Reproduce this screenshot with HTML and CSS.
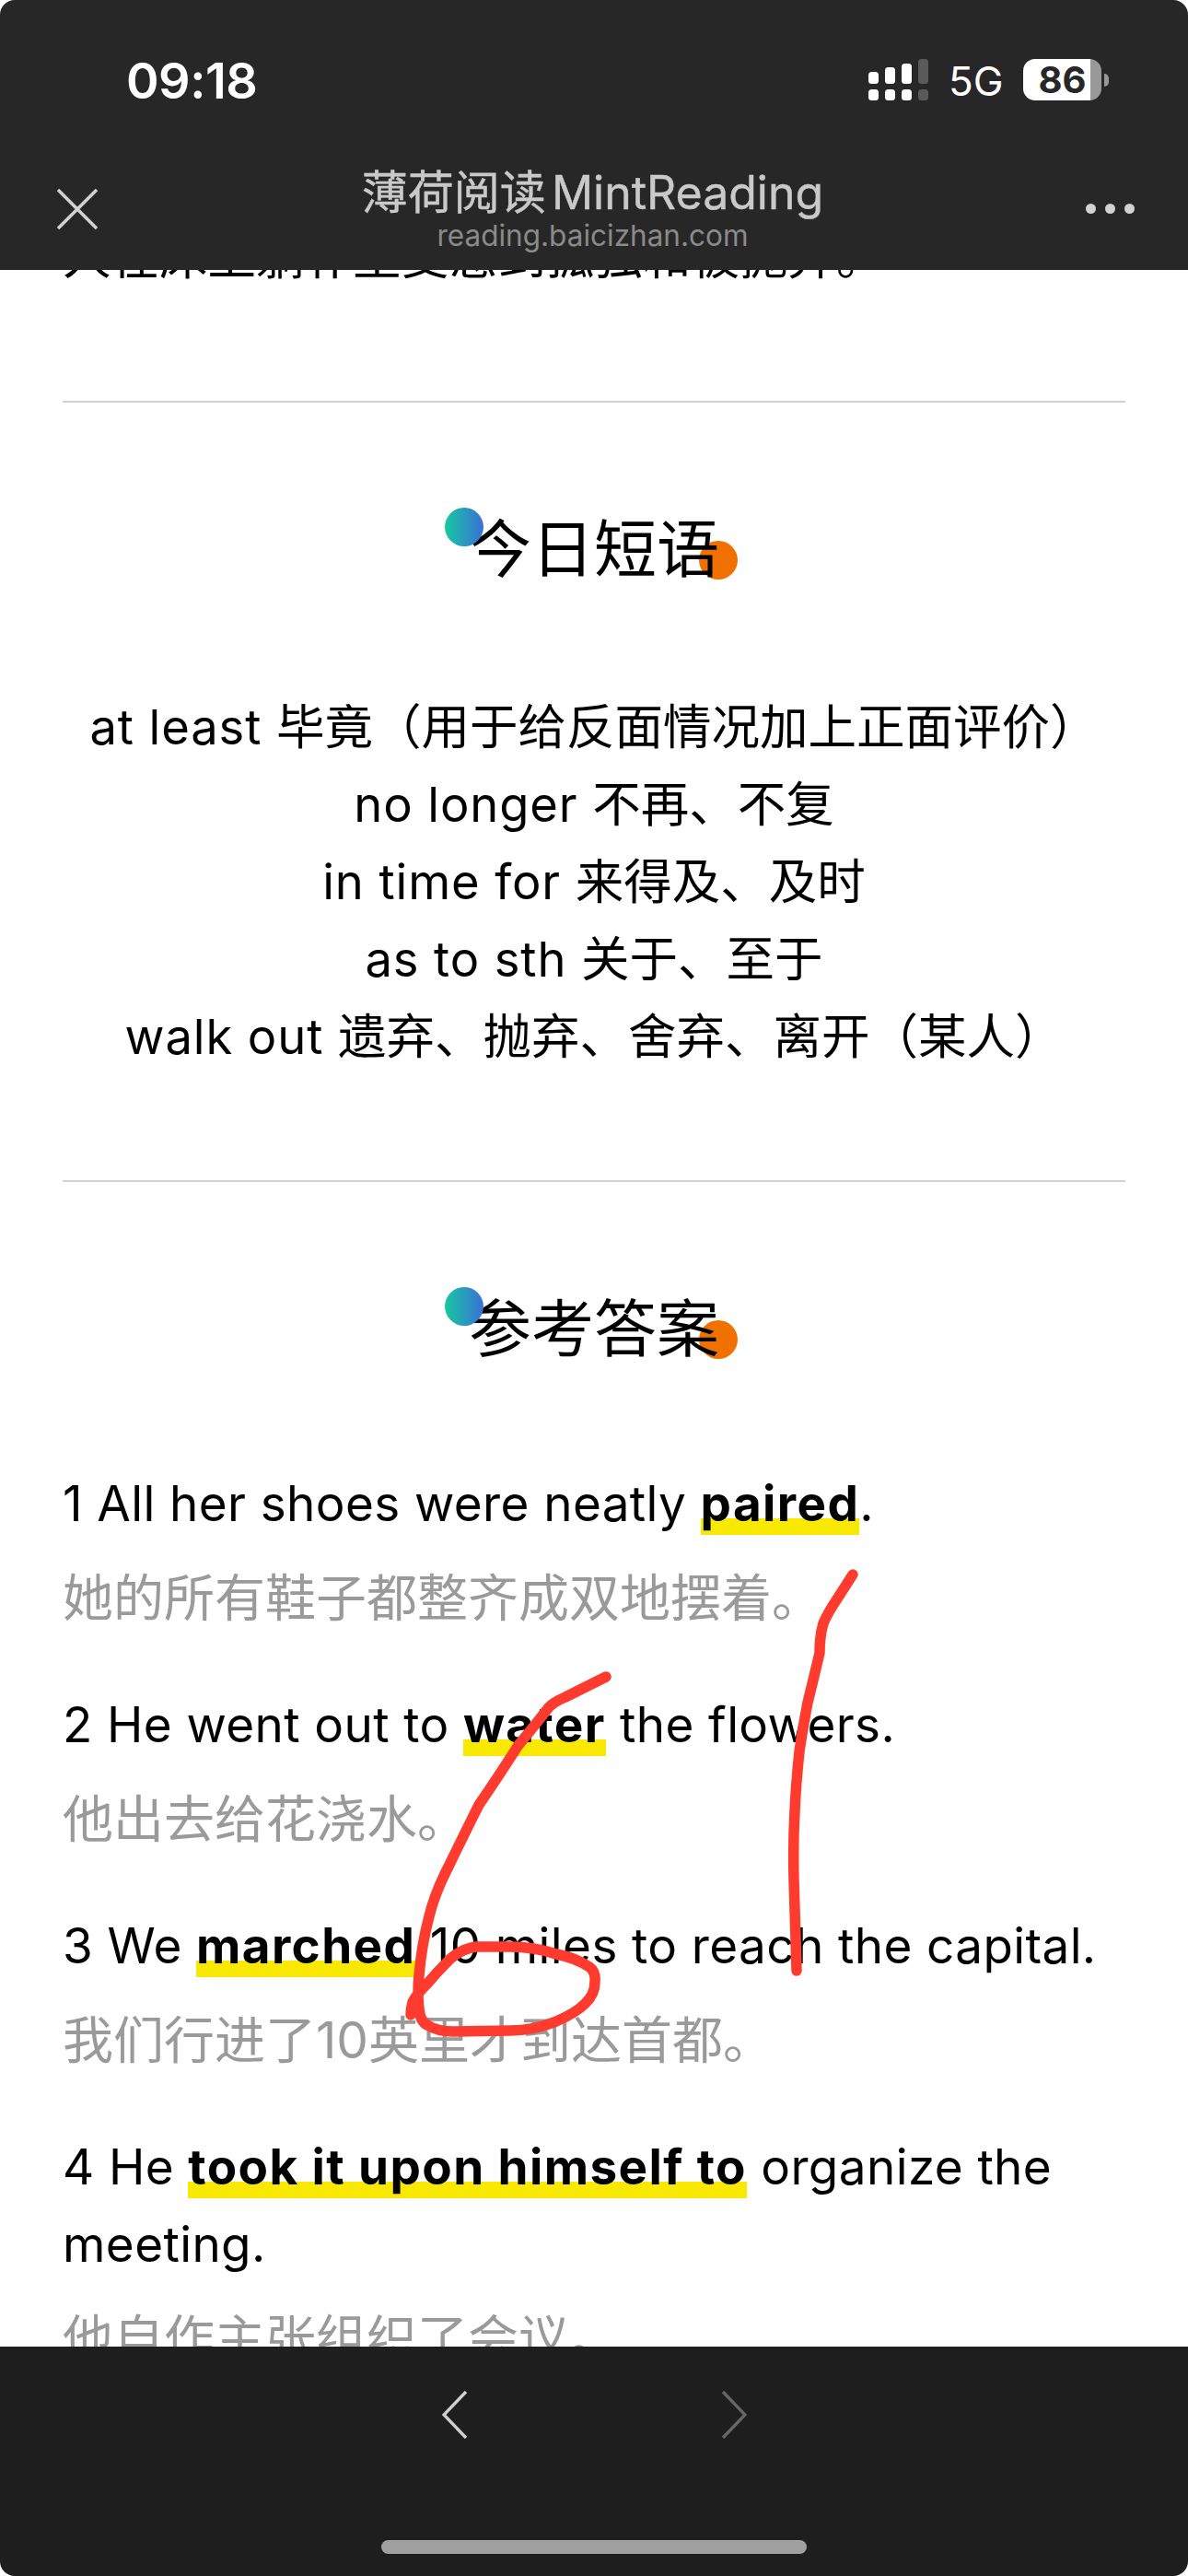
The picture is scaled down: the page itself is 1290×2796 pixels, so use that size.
FILE: index.html
```html
<!DOCTYPE html>
<html lang="zh">
<head>
<meta charset="utf-8">
<title>薄荷阅读 MintReading</title>
<link rel="stylesheet" href="styles.css">
</head>
<body>
<div class="phone">
  <header class="top">
    <div class="status">
      <span class="time">09:18</span>
      <div class="status-right">
        <svg class="signal" width="65" height="45" viewBox="0 0 65 45">
          <rect x="0" y="14" width="11" height="13" rx="3.5" fill="#fff"/>
          <rect x="18" y="9" width="11" height="18" rx="3.5" fill="#fff"/>
          <rect x="36" y="5" width="11" height="22" rx="3.5" fill="#fff"/>
          <rect x="54" y="0" width="11" height="27" rx="3.5" fill="#5a5a5a"/>
          <rect x="0" y="33" width="11" height="12" rx="3.5" fill="#fff"/>
          <rect x="18" y="33" width="11" height="12" rx="3.5" fill="#fff"/>
          <rect x="36" y="33" width="11" height="12" rx="3.5" fill="#fff"/>
          <rect x="54" y="33" width="11" height="12" rx="3.5" fill="#5a5a5a"/>
        </svg>
        <span class="net">5G</span>
        <div class="battery"><span class="level">86</span><span class="cap"></span></div>
      </div>
    </div>
    <nav class="bar">
      <svg class="close" width="44" height="44" viewBox="0 0 44 44"><path d="M1 1 43 43M43 1 1 43" stroke="#d2d2d2" stroke-width="3.6" fill="none"/></svg>
      <div class="titles">
        <div class="title">薄荷阅读 MintReading</div>
        <div class="url">reading.baicizhan.com</div>
      </div>
      <div class="more"><i></i><i></i><i></i></div>
    </nav>
  </header>

  <main class="content">
    <p class="lead">人在床上躺补里受惩到孤独和被抛弃。</p>
    <hr class="rule">
    <section class="block">
      <h2 class="heading"><span>今日短语</span></h2>
      <div class="phrases">
        <p><span class="latin">at least </span>毕竟（用于给反面情况加上正面评价）</p>
        <p><span class="latin">no longer </span>不再、不复</p>
        <p><span class="latin">in time for </span>来得及、及时</p>
        <p><span class="latin">as to sth </span>关于、至于</p>
        <p><span class="latin">walk out </span>遗弃、抛弃、舍弃、离开（某人）</p>
      </div>
    </section>
    <hr class="rule">
    <section class="block">
      <h2 class="heading"><span>参考答案</span></h2>
      <div class="answers">
        <div class="answer">
          <p class="en">1 All her shoes were neatly <b class="mark">paired</b>.</p>
          <p class="zh">她的所有鞋子都整齐成双地摆着。</p>
        </div>
        <div class="answer">
          <p class="en">2 He went out to <b class="mark">water</b> the flowers.</p>
          <p class="zh">他出去给花浇水。</p>
        </div>
        <div class="answer">
          <p class="en">3 We <b class="mark">marched</b> 10 miles to reach the capital.</p>
          <p class="zh">我们行进了10英里才到达首都。</p>
        </div>
        <div class="answer">
          <p class="en">4 He <b class="mark">took it upon himself to</b> organize the meeting.</p>
          <p class="zh">他自作主张组织了会议。</p>
        </div>
      </div>
    </section>
  </main>

  <footer class="bottom">
    <div class="arrows">
      <svg width="28" height="52" viewBox="0 0 28 52"><path d="M26 1 2 26 26 51" stroke="#d0d0d0" stroke-width="3.4" fill="none"/></svg>
      <svg width="28" height="52" viewBox="0 0 28 52"><path d="M2 1 26 26 2 51" stroke="#666" stroke-width="3.4" fill="none"/></svg>
    </div>
    <div class="home"></div>
  </footer>

  <svg class="ink" width="1290" height="2796" viewBox="0 0 1290 2796">
    <path d="M926 1709 L908 1737 Q898 1752 894 1762 Q890 1775 890 1794 Q884 1820 877 1848 Q871 1880 868 1901 Q864 1940 863 1966 Q861 2000 862 2040 L865 2139"/>
    <path d="M658 1820 L614 1842 Q602 1847 596 1853 Q575 1880 563 1894 Q540 1930 520 1959 Q502 1995 487 2026 Q472 2055 466 2080 Q458 2110 455 2144 Q453 2165 455 2180 Q456 2194 464 2198 Q475 2205 492 2205 L553 2204 Q580 2204 604 2194 Q625 2185 635 2175 Q646 2165 646 2151 Q647 2140 640 2135 Q625 2125 604 2121 Q580 2113 553 2113 L517 2113 Q502 2115 489 2126 Q475 2140 464 2153 Q452 2165 448 2173 Q446 2180 446 2187"/>
  </svg>
</div>
</body>
</html>
```
FILE: styles.css
```css
* { box-sizing: border-box; }
html, body { margin: 0; padding: 0; background: #fff; }
body { font-family: Inter, "Noto Sans CJK SC", sans-serif; color: #000; }

.phone {
  position: relative;
  width: 1290px;
  height: 2796px;
  display: flex;
  flex-direction: column;
  overflow: hidden;
  border-radius: 16px;
  background: #fff;
}

.top { background: #272727; height: 293px; flex: none; position: relative; z-index: 1; }
.status { display: flex; justify-content: space-between; align-items: flex-start; padding: 57px 86px 0 137px; height: 171px; }
.time { font-size: 54px; font-weight: 600; color: #fff; line-height: 62px; letter-spacing: -0.5px; }
.status-right { display: flex; align-items: flex-start; padding-top: 7px; }
.signal { display: block; margin-right: 22px; }
.net { font-size: 44px; line-height: 50px; color: #fff; margin-right: 26px; width: 55px; margin-top: -1px; }
.battery { display: flex; align-items: center; }
.level {
  width: 85px; height: 45px; border-radius: 13px;
  background: linear-gradient(90deg, #fff 73px, #999 73px);
  color: #272727; font-size: 40px; font-weight: 700; line-height: 45px; text-align: center;
}
.cap { width: 5px; height: 14px; margin-left: 3px; background: #999; border-radius: 0 7px 7px 0; }

.bar { display: flex; align-items: flex-start; justify-content: space-between; padding: 0 58px 0 62px; position: relative; }
.close { margin-top: 34px; display: block; }
.titles { position: absolute; left: 0; right: 3px; top: 5px; text-align: center; }
.title { font-size: 50px; line-height: 66px; color: #c9c9c9; word-spacing: -8px; -webkit-text-stroke: 0.4px #c9c9c9; }
.url { font-size: 31.5px; line-height: 36px; color: #8a8a8a; margin-top: -4px; }
.more { display: flex; gap: 10px; margin-top: 50px; }
.more i { display: block; width: 11px; height: 11px; border-radius: 50%; background: #d2d2d2; }

.content { flex: 1; min-height: 0; overflow: hidden; padding: 0 68px; font-size: 52.5px; line-height: 84px; }
.content p { margin: 0; }
.lead { margin-top: -56px !important; }
.rule { border: 0; height: 2px; background: #d2d2d2; margin: 114px 0 0; }

.heading { margin: 109px 0 0; text-align: center; font-size: 68px; line-height: 100px; font-weight: 400; }
.heading span { position: relative; z-index: 0; display: inline-block; }
.heading span::before,
.heading span::after { content: ""; position: absolute; width: 42px; height: 42px; border-radius: 50%; }
.heading span::before { left: -26px; top: 5px; background: linear-gradient(90deg, #17c9a0, #3a6fd8); }
.heading span::after { right: -20px; top: 41px; background: #f07000; z-index: -1; }

.phrases { margin-top: 101px; text-align: center; }
.latin { letter-spacing: 0.9px; }
.answers { margin-top: 98px; }
.answer + .answer { margin-top: 54px; }
.en { font-size: 53px; letter-spacing: 0.4px; }
.zh { margin-top: 18px !important; font-size: 55px; color: #9a9a9a; }
.mark {
  font-weight: 700;
  letter-spacing: 1.4px;
  padding-bottom: 2px;
  background: linear-gradient(transparent calc(100% - 18px), #f9e900 0);
}

.bottom { flex: none; height: 249px; background: #1e1e1e; position: relative; z-index: 1; padding-top: 48px; }
.arrows { display: flex; justify-content: center; gap: 275px; }
.arrows svg { display: block; }
.home { width: 462px; height: 15px; border-radius: 8px; background: #a0a0a0; margin: 110px auto 0; }

.ink { position: absolute; left: 0; top: 0; z-index: 2; pointer-events: none; }
.ink path { fill: none; stroke: #ff3b30; stroke-width: 11.5; stroke-linecap: round; stroke-linejoin: round; }
```
